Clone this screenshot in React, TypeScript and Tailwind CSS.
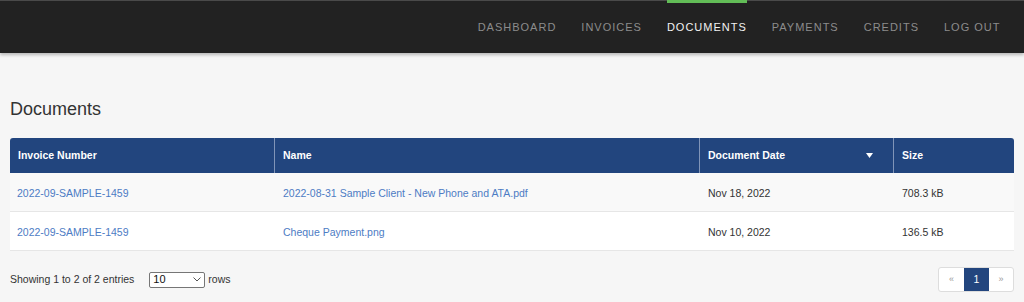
const navItems = ["Dashboard", "Invoices", "Documents", "Payments", "Credits", "Log Out"];

const docs = [
  {
    invoice: "2022-09-SAMPLE-1459",
    name: "2022-08-31 Sample Client - New Phone and ATA.pdf",
    date: "Nov 18, 2022",
    size: "708.3 kB",
  },
  {
    invoice: "2022-09-SAMPLE-1459",
    name: "Cheque Payment.png",
    date: "Nov 10, 2022",
    size: "136.5 kB",
  },
];

function NavBar() {
  return (
    <nav className="flex h-[53px] items-center justify-end border-t border-[#4a4a4a] bg-[#222222] pr-[11px] shadow-[0_2px_3px_rgba(0,0,0,0.25)]">
      {navItems.map((item) => {
        const active = item === "Documents";
        return (
          <a
            key={item}
            href="#"
            className={
              "relative flex h-full items-center px-[12.5px] pt-[1px] text-[11px] uppercase tracking-[1px] " +
              (active ? "text-[#f2f2f2]" : "text-[#8c8c8c]")
            }
          >
            {active ? (
              <span className="absolute left-[12.5px] right-[12.5px] top-[-1px] h-[3px] bg-[#62bd57]" />
            ) : null}
            {item}
          </a>
        );
      })}
    </nav>
  );
}

function SortArrow() {
  return (
    <svg width="7" height="5" viewBox="0 0 7 5" className="mr-[20px]">
      <path d="M0 0h7L3.5 5z" fill="#ffffff" />
    </svg>
  );
}

export default function App() {
  return (
    <div className="min-h-[302px] bg-[#f6f6f6] font-['Liberation_Sans',Arial,sans-serif] text-[10.5px] text-[#333333]">
      <NavBar />
      <main className="px-[10px]">
        <h1 className="mt-[46px] text-[18px] leading-[20px] font-normal">Documents</h1>

        <table className="mt-[19px] w-full table-fixed border-separate border-spacing-0">
          <colgroup>
            <col className="w-[265px]" />
            <col className="w-[425px]" />
            <col className="w-[194px]" />
            <col />
          </colgroup>
          <thead>
            <tr className="h-[35px] bg-[#22457e] text-left text-white">
              <th className="rounded-tl-[3px] border-r border-[#8094b8] pl-[8px] font-bold">Invoice Number</th>
              <th className="border-r border-[#8094b8] pl-[8px] font-bold">Name</th>
              <th className="border-r border-[#8094b8] pl-[8px] font-bold">
                <div className="flex items-center justify-between">
                  <span>Document Date</span>
                  <SortArrow />
                </div>
              </th>
              <th className="rounded-tr-[3px] pl-[8px] font-bold">Size</th>
            </tr>
          </thead>
          <tbody>
            {docs.map((d, i) => (
              <tr key={d.name} className={"h-[39px] " + (i % 2 === 0 ? "bg-[#f9f9f9]" : "bg-white")}>
                <td className="border-b border-[#e6e6e6] pl-[7px] pt-[3px]">
                  <a href="#" className="text-[#4d7cc4]">{d.invoice}</a>
                </td>
                <td className="border-b border-[#e6e6e6] pl-[8px] pt-[3px]">
                  <a href="#" className="text-[#4d7cc4]">{d.name}</a>
                </td>
                <td className="border-b border-[#e6e6e6] pl-[8px] pt-[3px]">{d.date}</td>
                <td className="border-b border-[#e6e6e6] pl-[8px] pt-[3px]">{d.size}</td>
              </tr>
            ))}
          </tbody>
        </table>

        <div className="mt-[16px] flex items-center justify-between">
          <div className="flex items-center">
            <span>Showing 1 to 2 of 2 entries</span>
            <div className="ml-[15px] flex h-[16px] w-[56px] items-center justify-between rounded-[2px] border border-[#767676] bg-white pl-[3px] pr-[3px] text-[11px] text-[#111]">
              <span>10</span>
              <svg width="8" height="5" viewBox="0 0 8 5">
                <path d="M0.5 0.5L4 4L7.5 0.5" fill="none" stroke="#555" strokeWidth="1" />
              </svg>
            </div>
            <span className="ml-[3px]">rows</span>
          </div>
          <div className="flex h-[25px] overflow-hidden rounded-[3px] border border-[#dddddd] bg-white text-[9px]">
            <span className="flex w-[25px] items-center justify-center text-[#999]">«</span>
            <span className="flex w-[25px] items-center justify-center bg-[#22457e] text-[10.5px] text-white">1</span>
            <span className="flex w-[24px] items-center justify-center text-[#999]">»</span>
          </div>
        </div>
      </main>
    </div>
  );
}
